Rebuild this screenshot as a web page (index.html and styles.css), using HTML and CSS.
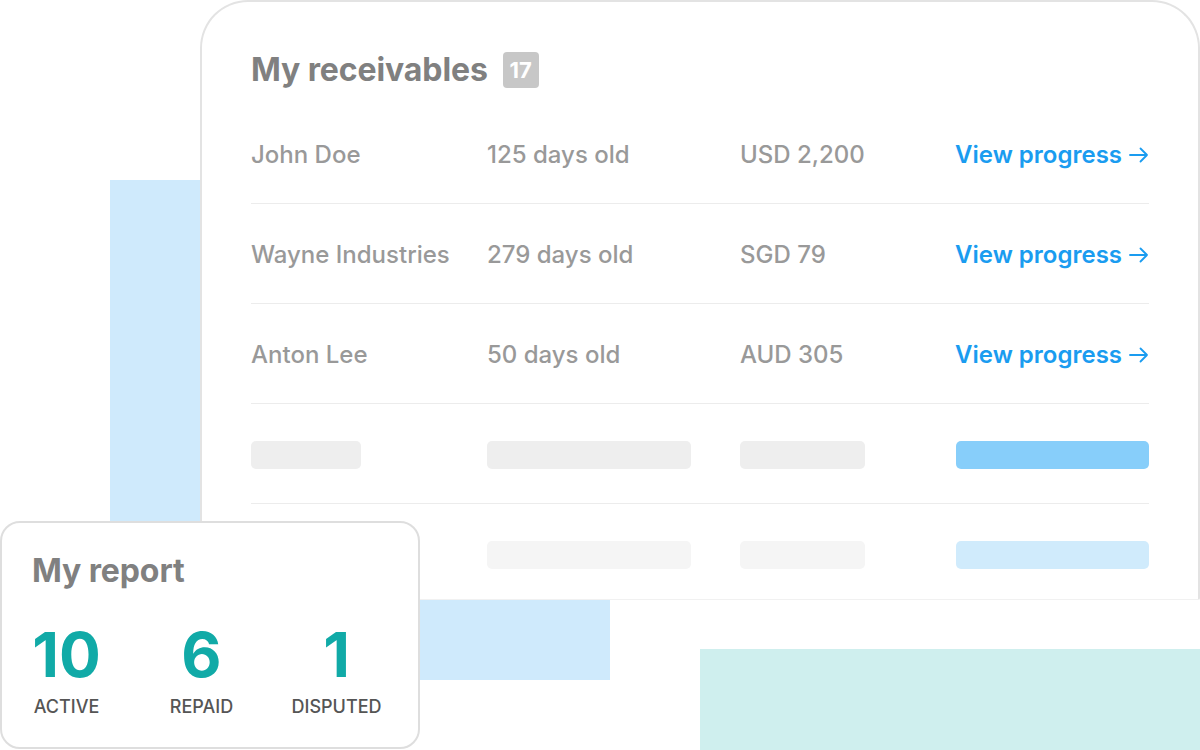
FILE: index.html
```html
<!DOCTYPE html>
<html lang="en">
<head>
<meta charset="utf-8">
<title>Receivables</title>
<link rel="stylesheet" href="styles.css">
</head>
<body>
<div class="stage">
  <div class="deco deco-blue"></div>
  <div class="deco deco-teal"></div>

  <section class="card receivables">
    <header class="rec-head">
      <h1 class="rec-title">My receivables</h1>
      <span class="badge">17</span>
    </header>
    <div class="row">
      <span class="cell">John Doe</span>
      <span class="cell">125 days old</span>
      <span class="cell">USD 2,200</span>
      <a class="link" href="#">View progress <svg class="arrow" viewBox="0 0 20 16" aria-hidden="true"><path d="M1 8h17M11.5 1.5L18 8l-6.5 6.5" fill="none" stroke="currentColor" stroke-width="1.8" stroke-linecap="round" stroke-linejoin="round"/></svg></a>
    </div>
    <div class="row">
      <span class="cell">Wayne Industries</span>
      <span class="cell">279 days old</span>
      <span class="cell">SGD 79</span>
      <a class="link" href="#">View progress <svg class="arrow" viewBox="0 0 20 16" aria-hidden="true"><path d="M1 8h17M11.5 1.5L18 8l-6.5 6.5" fill="none" stroke="currentColor" stroke-width="1.8" stroke-linecap="round" stroke-linejoin="round"/></svg></a>
    </div>
    <div class="row">
      <span class="cell">Anton Lee</span>
      <span class="cell">50 days old</span>
      <span class="cell">AUD 305</span>
      <a class="link" href="#">View progress <svg class="arrow" viewBox="0 0 20 16" aria-hidden="true"><path d="M1 8h17M11.5 1.5L18 8l-6.5 6.5" fill="none" stroke="currentColor" stroke-width="1.8" stroke-linecap="round" stroke-linejoin="round"/></svg></a>
    </div>
    <div class="row">
      <span class="bar bar-1"></span>
      <span class="bar bar-2"></span>
      <span class="bar bar-3"></span>
      <span class="bar bar-4 bar-blue"></span>
    </div>
    <div class="row row-last">
      <span class="bar bar-1 bar-faint"></span>
      <span class="bar bar-2 bar-faint"></span>
      <span class="bar bar-3 bar-faint"></span>
      <span class="bar bar-4 bar-blue-faint"></span>
    </div>
  </section>

  <section class="card report">
    <h2 class="rep-title">My report</h2>
    <div class="stats">
      <div class="stat"><span class="num">10</span><span class="label">ACTIVE</span></div>
      <div class="stat"><span class="num">6</span><span class="label">REPAID</span></div>
      <div class="stat"><span class="num">1</span><span class="label">DISPUTED</span></div>
    </div>
  </section>
</div>
</body>
</html>
```

FILE: styles.css
```css
* { box-sizing: border-box; }
html, body { margin: 0; padding: 0; background: #ffffff; }
body {
  font-family: Inter, "Noto Sans", "Liberation Sans", sans-serif;
  width: 1200px;
  height: 750px;
  overflow: hidden;
}
.stage {
  position: relative;
  width: 1200px;
  height: 750px;
}
.deco { position: absolute; }
.deco-blue {
  left: 110px; top: 180px; width: 500px; height: 500px;
  background: #cfeafc;
}
.deco-teal {
  left: 700px; top: 649px; width: 500px; height: 101px;
  background: #cfefee;
}
.card {
  position: absolute;
  background: #ffffff;
}
.receivables {
  left: 200px; top: 0; width: 1000px; height: 600px;
  border: 2px solid #e3e3e3;
  border-bottom: 1px solid #f1f1f1;
  border-radius: 48px 48px 2px 0;
  padding: 50px 49px 0 49px;
  overflow: hidden;
}
.rec-head {
  display: flex;
  align-items: center;
  height: 36px;
  margin-bottom: 16px;
}
.rec-title {
  margin: 0;
  font-size: 32px;
  line-height: 36px;
  font-weight: 700;
  color: #808080;
  letter-spacing: -0.1px;
}
.badge {
  margin-left: 15px;
  width: 36px; height: 36px;
  border-radius: 4px;
  background: #c7c7c7;
  color: #ffffff;
  font-size: 22px;
  font-weight: 700;
  line-height: 36px;
  text-align: center;
}
.row {
  display: grid;
  grid-template-columns: 236px 253px 1fr auto;
  align-items: center;
  height: 100px;
  padding-top: 2px;
  border-bottom: 1px solid #ececec;
}
.row-last { border-bottom: none; }
.cell {
  font-size: 24px;
  font-weight: 500;
  color: #999999;
  line-height: 1;
}
.link {
  display: flex;
  align-items: center;
  justify-self: end;
  font-size: 24px;
  font-weight: 600;
  color: #1a9cf0;
  text-decoration: none;
  line-height: 1;
}
.arrow {
  width: 20px; height: 16px;
  margin-left: 7px;
}
.bar {
  display: block;
  height: 28px;
  border-radius: 5px;
  background: #eeeeee;
}
.bar-1 { width: 110px; }
.bar-2 { width: 204px; }
.bar-3 { width: 125px; }
.bar-4 { width: 193px; justify-self: end; }
.bar-blue { background: #87cefa; }
.bar-faint { background: #f5f5f5; }
.bar-blue-faint { background: #d0ebfc; }

.report {
  left: 0; top: 521px; width: 420px; height: 228px;
  border: 2px solid #dedede;
  border-radius: 20px;
  padding: 30px 30px 0 30px;
}
.rep-title {
  margin: 0;
  font-size: 32px;
  line-height: 36px;
  font-weight: 700;
  color: #808080;
  letter-spacing: -0.1px;
}
.stats {
  display: grid;
  grid-template-columns: repeat(3, 135px);
  margin-left: -33px;
  margin-top: 35px;
}
.stat {
  display: flex;
  flex-direction: column;
  align-items: center;
}
.num {
  font-size: 62px;
  line-height: 62px;
  font-weight: 700;
  color: #11aaa7;
}
.label {
  margin-top: 12px;
  font-size: 18px;
  line-height: 18px;
  font-weight: 500;
  color: #555555;
}
```
